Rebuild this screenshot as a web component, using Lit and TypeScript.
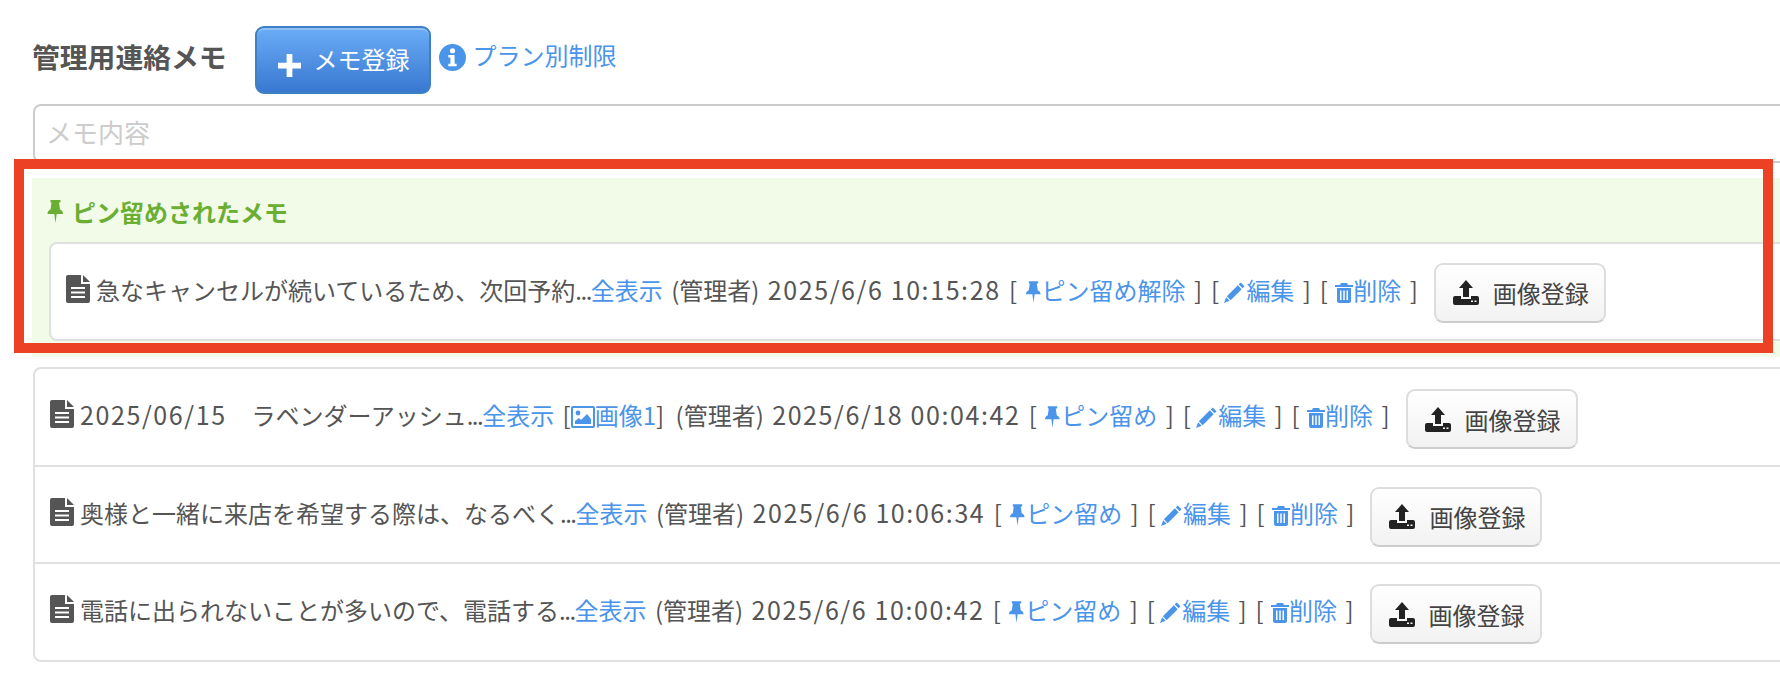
import { LitElement, html, css, svg } from "lit";
import { customElement } from "lit/decorators.js";

const fileIcon = html`<svg class="file" viewBox="0 0 24 28"><path fill-rule="evenodd" d="M2 0h13v9h9v17a2 2 0 0 1-2 2H2a2 2 0 0 1-2-2V2a2 2 0 0 1 2-2zM5 12v2h14v-2zM5 16.500v2h14v-2zM5 21v2h14v-2z"/><path d="M17 0l7 7h-7z"/></svg>`;
const pinIcon = html`<svg class="ic pin" viewBox="0 0 16 23"><path d="M3 0h10v2.500h-1.500l1 7c2 .8 3 2.200 3 4.500H9.200L8 23l-1.200-9H0c0-2.300 1-3.700 3-4.500l1-7H3z"/></svg>`;
const pencilIcon = html`<svg class="ic pencil" viewBox="0 0 22 22"><path d="M17.500.5l4 4-2 2-4-4zM14.500 3.500l4 4L7 19l-4-4zM2.300 16l3.700 3.700L0 22z"/></svg>`;
const trashIcon = html`<svg class="ic trash" viewBox="0 0 18 20"><path fill-rule="evenodd" d="M6 0h6l1 2h5v2H0V2h5zM2 5h14v13a2 2 0 0 1-2 2H4a2 2 0 0 1-2-2zM5 7.500V17h1.500V7.500zM8.250 7.500V17h1.500V7.500zM11.500 7.500V17H13V7.500z"/></svg>`;
const pictureIcon = html`<svg class="ic picture" viewBox="0 0 24 22"><path fill-rule="evenodd" d="M2 0h20a2 2 0 0 1 2 2v18a2 2 0 0 1-2 2H2a2 2 0 0 1-2-2V2a2 2 0 0 1 2-2zM2 2v18h20V2z"/><circle cx="7" cy="7" r="2.400"/><path d="M4 18v-3l4-3 2 2 6-6 4 5v5z"/></svg>`;
const uploadIcon = html`<svg class="upload" viewBox="0 0 26 25"><path d="M13 0l7 8h-4v9h-6V8H6z"/><path fill-rule="evenodd" d="M2 16h6v3h10v-3h6a2 2 0 0 1 2 2v5a2 2 0 0 1-2 2H2a2 2 0 0 1-2-2v-5a2 2 0 0 1 2-2zM18 20.500v1.500h2v-1.500zM21.500 20.500v1.500h2v-1.500z"/></svg>`;
const infoIcon = svg`<circle cx="13" cy="13" r="13" fill="#4a94ea"/><circle cx="13" cy="6.500" r="2.500" fill="#fff"/><path fill="#fff" d="M9 10.500h6V19h2v2.500H9V19h2v-6H9z"/>`;

type Memo = { lead?: string; text: string; image?: string; date: string };

const others: Memo[] = [
	{ lead: "2025/06/15", text: "　ラベンダーアッシュ", image: "画像1", date: "2025/6/18 00:04:42" },
	{ text: "奥様と一緒に来店を希望する際は、なるべく", date: "2025/6/6 10:06:34" },
	{ text: "電話に出られないことが多いので、電話する", date: "2025/6/6 10:00:42" },
];

@customElement("app-root")
export class AppRoot extends LitElement {
	static styles = css`
		:host {
			display: block;
			position: relative;
			height: 690px;
			overflow: hidden;
			background: #fff;
			font-family: "Noto Sans CJK JP", "Noto Sans", sans-serif;
			font-size: 24px;
			color: #555;
		}

		.page {
			width: 1800px;
			padding: 26px 0 0 33px;
		}

		.head {
			display: flex;
			align-items: center;
		}

		h2 {
			margin: 0 28px 8px -1px;
			font-size: 27.800px;
			font-weight: 700;
			line-height: 36px;
			color: #555;
		}

		.add {
			display: flex;
			align-items: center;
			gap: 13px;
			box-sizing: border-box;
			width: 176px;
			height: 68px;
			padding-left: 21px;
			border: 2px solid #3f7fc4;
			border-radius: 9px;
			background: linear-gradient(#6bacf7, #3878d0);
			box-shadow: inset 0 2px 0 rgba(255, 255, 255, 0.25);
			color: #fff;
		}

		.add span {
			padding-bottom: 4px;
		}

		.add svg {
			width: 23px;
			height: 23px;
			fill: #fff;
			margin-top: 10px;
		}

		.plan {
			display: flex;
			align-items: center;
			gap: 7px;
			margin: 0 0 12px 8px;
			color: #4a94ea;
		}

		.plan svg {
			width: 27px;
			height: 27px;
			margin-top: 6px;
		}

		.input {
			box-sizing: border-box;
			height: 59px;
			margin-top: 10px;
			padding: 0 11px;
			border: 2px solid #ccc;
			border-radius: 8px;
			color: #ccc;
			font-size: 26px;
			line-height: 52px;
		}

		.pinned {
			margin: 15px 0 0 -1px;
			padding: 13px 0 16px 17px;
			background: #f1fbe7;
		}

		.pinned-title {
			display: flex;
			align-items: center;
			gap: 8px;
			height: 41px;
			margin: 0 0 10px -2px;
			color: #6bae34;
			font-weight: 700;
		}

		.pinned-title svg {
			width: 17px;
			height: 23px;
			fill: #6bae34;
		}

		.card,
		.list {
			background: #fff;
			border: 2px solid #e0e0e0;
			border-radius: 8px;
		}

		.list {
			margin-top: 10px;
		}

		.row {
			box-sizing: border-box;
			display: flex;
			align-items: center;
			height: 96px;
			padding-left: 15px;
			white-space: nowrap;
		}

		.card .row {
			height: 95px;
		}

		.list .row + .row {
			border-top: 2px solid #e0e0e0;
			height: 97px;
		}

		.list .row:last-child {
			height: 98px;
		}

		.file {
			flex: none;
			width: 24px;
			height: 28px;
			fill: #555;
			margin: 0 6px 6px 0;
		}

		.text {
			display: block;
			padding-bottom: 6px;
			word-spacing: 3px;
		}

		.num {
			font-size: 25px;
			letter-spacing: 1.600px;
			word-spacing: 0;
		}

		.lead {
			margin-right: 1px;
		}

		.dots {
			letter-spacing: -1.500px;
		}

		.group {
			margin-left: 0.500px;
		}

		.shot {
			margin-right: 3px;
		}

		a {
			color: #4a94ea;
		}

		.ic {
			fill: #4a94ea;
			vertical-align: -3px;
		}

		.pin {
			width: 15px;
			height: 22px;
			margin-right: 1px;
		}

		.pencil {
			width: 21px;
			height: 21px;
			margin: 0 1px 0 -3px;
		}

		.trash {
			width: 18px;
			height: 20px;
			margin-left: -1px;
		}

		.picture {
			width: 24px;
			height: 22px;
		}

		.up {
			flex: none;
			box-sizing: border-box;
			display: flex;
			align-items: center;
			gap: 14px;
			width: 172px;
			height: 60px;
			margin: 4px 0 0 16px;
			padding-left: 17px;
			border: 2px solid #ddd;
			border-bottom-color: #ccc;
			border-radius: 9px;
			background: linear-gradient(#fff, #f2f2f2);
			color: #444;
		}

		.card .up {
			margin-top: 2px;
		}

		.upload {
			width: 26px;
			height: 25px;
			fill: #222;
		}

		.mark {
			position: absolute;
			left: 14px;
			top: 159px;
			box-sizing: border-box;
			width: 1759px;
			height: 194px;
			border: 10px solid #ec4125;
		}
	`;

	private renderRow(memo: Memo, pinned: boolean) {
		return html`<div class="row">
			${fileIcon}
			<span class="text">${memo.lead ? html`<span class="num lead">${memo.lead}</span>` : ""}${memo.text}<span class="dots">...</span><a>全表示</a>
				${memo.image ? html`<span class="shot">[<a>${pictureIcon}${memo.image}</a>]</span> ` : ""}(管理者)
				<span class="num">${memo.date}</span>
				[ <a>${pinIcon}${pinned ? "ピン留め解除" : "ピン留め"}</a> ]
				<span class="group">[ <a>${pencilIcon}編集</a> ]</span>
				<span class="group">[ <a>${trashIcon}削除</a> ]</span></span>
			<div class="up">${uploadIcon}<span>画像登録</span></div>
		</div>`;
	}

	render() {
		return html`
			<div class="page">
				<div class="head">
					<h2>管理用連絡メモ</h2>
					<div class="add">
						<svg viewBox="0 0 24 24"><path d="M9 0h6v9h9v6h-9v9H9v-9H0V9h9z" /></svg>
						<span>メモ登録</span>
					</div>
					<a class="plan"><svg viewBox="0 0 26 26">${infoIcon}</svg>プラン別制限</a>
				</div>
				<div class="input">メモ内容</div>
				<div class="pinned">
					<div class="pinned-title">
						<svg viewBox="0 0 16 23"><path d="M3 0h10v2.500h-1.500l1 7c2 .8 3 2.200 3 4.500H9.200L8 23l-1.200-9H0c0-2.300 1-3.700 3-4.500l1-7H3z" /></svg>
						<span>ピン留めされたメモ</span>
					</div>
					<div class="card">
						${this.renderRow({ text: "急なキャンセルが続いているため、次回予約", date: "2025/6/6 10:15:28" }, true)}
					</div>
				</div>
				<div class="list">${others.map((m) => this.renderRow(m, false))}</div>
			</div>
			<div class="mark"></div>
		`;
	}
}
